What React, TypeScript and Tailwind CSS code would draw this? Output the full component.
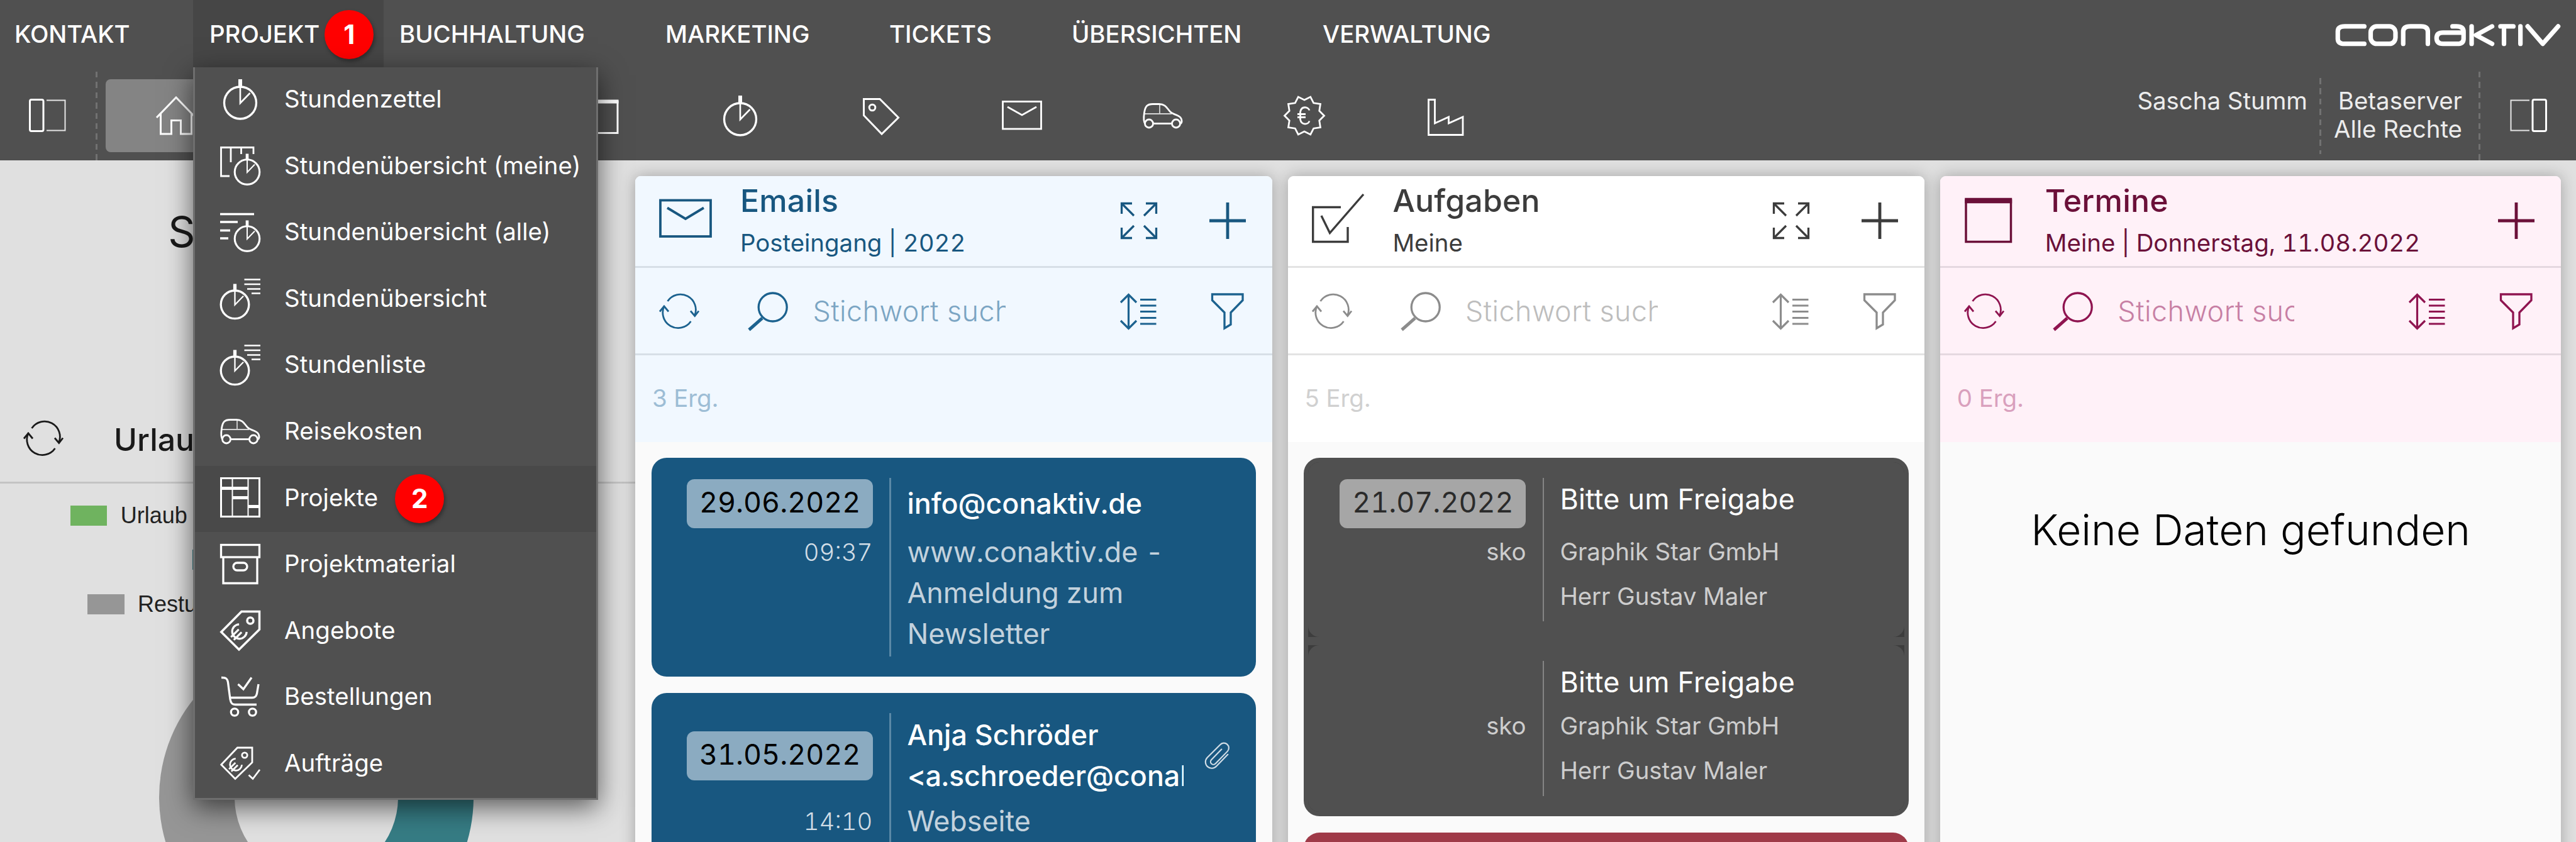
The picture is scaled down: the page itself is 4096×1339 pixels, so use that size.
import type { ReactNode } from "react";

type IconProps = { className?: string };

function Svg({
  w,
  h,
  sw = 3.3,
  className = "",
  children,
}: {
  w: number;
  h: number;
  sw?: number;
  className?: string;
  children: ReactNode;
}) {
  return (
    <svg
      width={w}
      height={h}
      viewBox={`0 0 ${w} ${h}`}
      fill="none"
      stroke="currentColor"
      strokeWidth={sw}
      className={`shrink-0 overflow-visible ${className}`}
      aria-hidden="true"
    >
      {children}
    </svg>
  );
}

/* ---------- toolbar and menu icons, 64 x 64 ---------- */

const Watch = () => (
  <>
    <circle cx="32" cy="37.5" r="25.5" />
    <path d="M32 0V12" strokeWidth="6" />
    <path d="M32 10V38L47.5 22" strokeWidth="2.6" />
  </>
);

const StopwatchIcon = () => (
  <Svg w={64} h={64}>
    <Watch />
  </Svg>
);

const WatchFrameIcon = () => (
  <Svg w={64} h={64}>
    <path d="M15 49H1.5V3.5H53V14M17 3.5V27M33.5 3.5V14" strokeWidth="2.8" />
    <g transform="translate(18.2 13.5) scale(0.775)" strokeWidth="4">
      <Watch />
    </g>
  </Svg>
);

const WatchLinesIcon = () => (
  <Svg w={64} h={64}>
    <path d="M0 3.5H54M0 16H28M0 29.5H16M0 42H13" />
    <g transform="translate(18.2 13.5) scale(0.775)" strokeWidth="4">
      <Watch />
    </g>
  </Svg>
);

const WatchListIcon = () => (
  <Svg w={64} h={64}>
    <path d="M38.5 1.5H64M38.5 9H64M43 16.5H64M50 23.5H64" strokeWidth="2.6" />
    <g transform="translate(-4.5 8.5) scale(0.875)" strokeWidth="3.8">
      <Watch />
    </g>
  </Svg>
);

const CarIcon = () => (
  <Svg w={64} h={64} sw={2.8}>
    <g transform="translate(0 12)">
      <path d="M4 33C1 30 1.5 22 2.5 15C4 5 7 1.5 16 1.5H26C37 1.5 38 8 44 14C47 17 51 17.5 56 20C62.500 23 63.500 30 60 33" />
      <path d="M17 32.5H46" />
      <path d="M2.500 17H46M27 1.5V17" strokeWidth="1.8" opacity="0.75" />
      <circle cx="10" cy="32.500" r="6.500" />
      <circle cx="53" cy="32.500" r="6.500" />
    </g>
  </Svg>
);

const PlanIcon = () => (
  <Svg w={64} h={64} sw={3}>
    <rect x="1.5" y="1.500" width="61" height="61" />
    <path d="M19.500 2V62M44.500 2V62" strokeWidth="2" />
    <path d="M2 17.500H45M19.500 32.500H45M44 46.500H62" strokeWidth="5" />
  </Svg>
);

const BoxIcon = () => (
  <Svg w={64} h={64}>
    <rect x="1.500" y="1.500" width="61" height="19.500" />
    <path d="M5 21V62.500H59V21" />
    <rect x="21" y="30" width="22" height="12" rx="6" />
  </Svg>
);

const Euro = () => (
  <>
    <path d="M8 -8.500A11.500 11.500 0 1 0 8 8.500" />
    <path d="M-15.500 -3.200H2M-15.500 3.200H2" />
  </>
);

const OfferIcon = () => (
  <Svg w={64} h={64} sw={3.5}>
    <path d="M34 1.500H62.500V30L30 62L1.800 34Z" />
    <circle cx="48" cy="16" r="5" />
    <g transform="translate(30.500 33.500) rotate(-45)" strokeWidth="3.200">
      <Euro />
    </g>
  </Svg>
);

const CartIcon = () => (
  <Svg w={64} h={64}>
    <path d="M2 1.500C9 1.500 11.500 3 12.500 9L16 36C17 42 19 44.500 24 44.500H58" />
    <path d="M16 33.500H51C56 33.500 57.500 31 58.500 27L61 12" />
    <path d="M28.500 12L37 20L50 1.500" />
    <circle cx="23" cy="56.500" r="5.700" />
    <circle cx="51.500" cy="56.500" r="5.700" />
  </Svg>
);

const OrderIcon = () => (
  <Svg w={64} h={64} sw={2.8}>
    <path d="M27.500 7H51V30.500L24 56.500L1.800 34Z" />
    <circle cx="39" cy="19" r="4.200" />
    <g transform="translate(25 34) rotate(-45) scale(0.820)" strokeWidth="3.400">
      <Euro />
    </g>
    <path d="M45.500 50.500L52 56.500L63 42" />
  </Svg>
);

const HomeIcon = () => (
  <Svg w={64} h={64} sw={3}>
    <path d="M1 35L32 3L63 35" />
    <path d="M7.500 29V61H24.500V39.500H39.500V61H56.500V29" />
  </Svg>
);

const CalendarIcon = () => (
  <Svg w={64} h={64} sw={3}>
    <path d="M3 8V59.500H61V8" />
    <path d="M1.500 9.500H62.500" strokeWidth="6" />
  </Svg>
);

const TagIcon = () => (
  <Svg w={64} h={64} sw={3}>
    <g transform="translate(3 4)">
      <path d="M1.500 1.500H27L56.500 31L30 57L1.500 27.500Z" />
      <circle cx="15" cy="15" r="4.800" />
    </g>
  </Svg>
);

const MailIcon = () => (
  <Svg w={64} h={64} sw={2.8}>
    <rect x="1.500" y="9.500" width="61" height="43.500" />
    <path d="M9 18L32 31L55 18" />
  </Svg>
);

const sealPoints = Array.from({ length: 20 }, (_, i) => {
  const r = i % 2 ? 31.5 : 25;
  const a = (i * 18 * Math.PI) / 180;
  return `${(32 + r * Math.sin(a)).toFixed(2)},${(32 - r * Math.cos(a)).toFixed(2)}`;
}).join(" ");

const SealIcon = () => (
  <Svg w={64} h={64} sw={2.8}>
    <polygon points={sealPoints} />
    <path d="M40 23.500C38.500 18 27.500 15.500 25.500 26V38C27.500 48 38.500 46 40 40.500M21 29.500H34M21 34.500H34" />
  </Svg>
);

const FactoryIcon = () => (
  <Svg w={64} h={64} sw={2.800}>
    <path d="M5.500 6.500H15.500V44L37.500 34V44L60 34V62.500H5.500Z" />
  </Svg>
);

const PanelIcon = ({ className = "" }: IconProps) => (
  <Svg w={59} h={53} className={className}>
    <rect x="1.500" y="1.500" width="21.500" height="50" rx="2.500" strokeWidth="3" />
    <path d="M28 2.500H57.500V50.500H28" strokeWidth="2" opacity="0.850" />
  </Svg>
);

/* ---------- panel icons ---------- */

const RefreshIcon = ({ className = "" }: IconProps) => (
  <Svg w={64} h={52} sw={2.800} className={className}>
    <path d="M13.500 10A24.500 24.500 0 0 1 56.500 33M50.500 42A24.500 24.500 0 0 1 8 18" />
    <path d="M50 25.500L56.800 33.500L63 25.500M1 26.500L8 18L15 26.500" />
  </Svg>
);

const SearchIcon = () => (
  <Svg w={64} h={62}>
    <circle cx="39.700" cy="24.500" r="22.500" />
    <path d="M23 42L2 60.500" strokeWidth="5" />
  </Svg>
);

const SortIcon = ({ className = "" }: IconProps) => (
  <Svg w={58} h={57} sw={3.200} className={className}>
    <path d="M13.500 2V55M1 14L13.500 1.500L26 14M1 43L13.500 55.500L26 43" />
    <path d="M32 9.500H57.500M32 19H57.500M32 28.500H57.500M32 38.500H57.500M32 48H57.500" />
  </Svg>
);

const FilterIcon = ({ className = "" }: IconProps) => (
  <Svg w={52} h={58} className={className}>
    <path d="M1.500 2H50V11.500L31 31V50L21 56V31L1.500 11.500Z" />
  </Svg>
);

const ExpandIcon = () => (
  <Svg w={58} h={58}>
    <path d="M1.500 18V1.500H18M40 1.500H56.500V18M56.500 40V56.500H40M18 56.500H1.500V40" />
    <path d="M2 2L21 21M56 2L37 21M56 56L37 37M2 56L21 37" />
  </Svg>
);

const PlusIcon = () => (
  <Svg w={58} h={58} sw={4.800}>
    <path d="M29 0V58M0 29H58" />
  </Svg>
);

const BigMailIcon = () => (
  <Svg w={84} h={84} sw={3.800}>
    <rect x="2" y="9.500" width="80" height="57.500" />
    <path d="M13 21.500L42 39L71 21.500" />
  </Svg>
);

const BigCheckIcon = () => (
  <Svg w={84} h={84} sw={3.400}>
    <path d="M46 20.500H1.700V75.500H57V52" />
    <path d="M15 34L28.500 61.500L82 0" />
  </Svg>
);

const BigCalendarIcon = () => (
  <Svg w={84} h={84} sw={3.500}>
    <path d="M3 8V75.500H74.500V8" />
    <path d="M1.200 10H76.200" strokeWidth="8.500" />
  </Svg>
);

const ClipIcon = () => (
  <svg
    width="52"
    height="52"
    viewBox="0 0 24 24"
    fill="none"
    stroke="currentColor"
    strokeWidth="1"
    strokeLinecap="round"
    className="shrink-0"
    aria-hidden="true"
  >
    <path d="m20 11-8.400 8.600a4.500 4.500 0 0 1-6.800-6.200l9.600-9.600a3.600 3.600 0 0 1 5.400 4.800l-8.800 9a2 2 0 0 1-3.200-2.600l7.600-7.800" />
  </svg>
);

const Logo = () => (
  <svg
    width="373"
    height="56"
    viewBox="0 0 1398 210"
    fill="none"
    stroke="currentColor"
    strokeWidth="27"
    strokeLinecap="round"
    strokeLinejoin="round"
    role="img"
    aria-label="ConAktiv"
  >
    <path d="M196 56H80Q38 56 38 86V130Q38 160 80 160H196" />
    <rect x="234" y="56" width="148" height="104" rx="36" />
    <path d="M428 160V88Q428 56 470 56H534Q575 56 575 88V160" />
    <path d="M722 56H745Q788 56 788 88V130Q788 160 750 160H665Q627 160 627 126Q627 93 665 93H782" />
    <path d="M836 56V160M958 56L862 108L958 160" />
    <path d="M1008 56H1085M1029 60V160M1127 56V160M1170 56L1260 160L1352 56" />
  </svg>
);

/* ---------- header ---------- */

const Badge = ({ children, className }: { children: ReactNode; className: string }) => (
  <span
    className={`flex size-[78px] shrink-0 items-center justify-center rounded-full bg-[#ff0000] text-[42px] leading-none font-bold text-white shadow-[2px_4px_6px_rgba(0,0,0,0.35)] ${className}`}
  >
    {children}
  </span>
);

const Dashes = ({ className }: { className: string }) => (
  <div
    className={`w-[3px] shrink-0 bg-[repeating-linear-gradient(to_bottom,#717171_0_9.5px,transparent_9.5px_16.4px)] ${className}`}
  />
);

const Nav = () => (
  <nav className="flex h-[107px] items-center pt-[2px] text-[38.4px] font-medium tracking-[-0.050px] text-white">
    <span className="w-[307px] pl-[23px]">KONTAKT</span>
    <span className="-mt-[2px] flex h-[107px] w-[303px] items-center bg-[#464646] pt-[2px] pl-[26px]">
      PROJEKT
      <Badge className="ml-[8px]">1</Badge>
    </span>
    <span className="w-[424px] pl-[25px]">BUCHHALTUNG</span>
    <span className="w-[356px] pl-[24px]">MARKETING</span>
    <span className="w-[290px] pl-[24px]">TICKETS</span>
    <span className="w-[398px] pl-[24px]">ÜBERSICHTEN</span>
    <span className="pl-[25px]">VERWALTUNG</span>
    <div className="mr-[16px] ml-auto">
      <Logo />
    </div>
  </nav>
);

const Cell = ({ children, active }: { children?: ReactNode; active?: boolean }) => (
  <div
    className={`flex h-[116px] w-[224.200px] items-center justify-center rounded-[8px] ${active ? "bg-[#848484]" : ""}`}
  >
    {children}
  </div>
);

const Toolbar = () => (
  <div className="flex h-[148px] text-white">
    <div className="flex w-[152px] items-center pt-[4px] pl-[46px]">
      <PanelIcon />
    </div>
    <Dashes className="mt-[7px]" />
    <div className="ml-[13px] flex items-center pt-[6px]">
      <Cell active>
        <HomeIcon />
      </Cell>
      <Cell />
      <Cell />
      <Cell>
        <CalendarIcon />
      </Cell>
      <Cell>
        <StopwatchIcon />
      </Cell>
      <Cell>
        <TagIcon />
      </Cell>
      <Cell>
        <MailIcon />
      </Cell>
      <Cell>
        <CarIcon />
      </Cell>
      <Cell>
        <SealIcon />
      </Cell>
      <Cell>
        <FactoryIcon />
      </Cell>
    </div>
    <div className="ml-auto flex text-right text-[38.4px] leading-[44.8px] text-[#ececec]">
      <div className="pt-[31px] pr-[19px]">Sascha Stumm</div>
      <Dashes className="mt-[17px] mb-[10px]" />
      <div className="w-[250px] pt-[31px] pr-[26px]">
        Betaserver
        <br />
        Alle Rechte
      </div>
      <Dashes className="mt-[7px]" />
      <div className="flex items-center pt-[4px] pr-[46px] pl-[47px] text-white">
        <PanelIcon className="rotate-180" />
      </div>
    </div>
  </div>
);

/* ---------- dropdown menu ---------- */

const menu: { label: string; icon: ReactNode; badge?: string }[] = [
  { label: "Stundenzettel", icon: <StopwatchIcon /> },
  { label: "Stundenübersicht (meine)", icon: <WatchFrameIcon /> },
  { label: "Stundenübersicht (alle)", icon: <WatchLinesIcon /> },
  { label: "Stundenübersicht", icon: <WatchListIcon /> },
  { label: "Stundenliste", icon: <WatchListIcon /> },
  { label: "Reisekosten", icon: <CarIcon /> },
  { label: "Projekte", icon: <PlanIcon />, badge: "2" },
  { label: "Projektmaterial", icon: <BoxIcon /> },
  { label: "Angebote", icon: <OfferIcon /> },
  { label: "Bestellungen", icon: <CartIcon /> },
  { label: "Aufträge", icon: <OrderIcon /> },
];

const Menu = () => (
  <div className="absolute top-[107px] left-[307px] z-10 w-[643.5px] border-x-[3px] border-b-[3px] border-[#6e6e6e] bg-[#505050] text-white shadow-[0_12px_40px_rgba(0,0,0,0.6)]">
    {menu.map((m) => (
      <div
        key={m.label}
        className={`flex h-[105.6px] items-center pb-[4px] pl-[39.5px] text-[38.4px] tracking-[0.08px] ${m.badge ? "bg-[#494949]" : ""}`}
      >
        {m.icon}
        <span className="ml-[38.5px]">{m.label}</span>
        {m.badge && <Badge className="mt-[3px] ml-[27px]">{m.badge}</Badge>}
      </div>
    ))}
  </div>
);

/* ---------- left dashboard area ---------- */

const Swatch = ({ className, label }: { className: string; label?: string }) => (
  <div className="flex h-[70.5px] items-center">
    <div className={`h-[32px] w-[58.5px] shrink-0 ${className}`} />
    {label && (
      <span className="ml-[21.500px] font-['Liberation_Sans'] text-[36px] leading-none text-[#222]">{label}</span>
    )}
  </div>
);

const Dashboard = () => (
  <section className="flex w-[1010.4px] shrink-0 flex-col">
    <div className="flex h-[228px] items-center justify-center text-[67.5px] text-[#1a1a1a]">
      Sascha Stumm
    </div>
    <div className="mt-[149px] flex h-[137px] items-center border-b-[3px] border-[#c4c4c4] pl-[37px] text-[50px] font-medium text-[#1a1a1a]">
      <RefreshIcon className="-mt-[4px]" />
      <span className="ml-[80px]">Urlaub</span>
    </div>
    <div className="pt-[15.500px]">
      <Swatch className="ml-[111.7px] bg-[#6fb35f]" label="Urlaub" />
      <Swatch className="ml-[305.5px] bg-[#367c84]" />
      <Swatch className="ml-[139px] bg-[#969696]" label="Resturlaub" />
    </div>
    <svg width="500" height="500" viewBox="-250 -250 500 500" className="mt-[22px] ml-[252.5px] shrink-0">
      <path d="M0 -250A250 250 0 0 0 0 250V130A130 130 0 0 1 0 -130Z" fill="#969696" />
      <path d="M0 -250A250 250 0 0 1 0 250V130A130 130 0 0 0 0 -130Z" fill="#367c84" />
    </svg>
  </section>
);

/* ---------- panels ---------- */

type Tone = { head: string; title: string; tools: string; hint: string; count: string; line: string };

const tones: Record<"blue" | "gray" | "pink", Tone> = {
  blue: {
    head: "bg-[#f1f8ff]",
    title: "text-[#185780]",
    tools: "text-[#1c628f]",
    hint: "text-[#7ba5c3]",
    count: "text-[#9dbdd5]",
    line: "border-[#d7dfe7]",
  },
  gray: {
    head: "bg-white",
    title: "text-[#3c3c3c]",
    tools: "text-[#8c8c8c]",
    hint: "text-[#bdbdbd]",
    count: "text-[#d0d0d0]",
    line: "border-[#e3e3e3]",
  },
  pink: {
    head: "bg-[#fff1f8]",
    title: "text-[#6b1039]",
    tools: "text-[#8f1450]",
    hint: "text-[#c77fa4]",
    count: "text-[#d9a0bd]",
    line: "border-[#e5d8e0]",
  },
};

function Panel({
  tone,
  width,
  icon,
  title,
  sub,
  count,
  expand = true,
  children,
}: {
  tone: Tone;
  width: string;
  icon: ReactNode;
  title: string;
  sub: string;
  count: string;
  expand?: boolean;
  children: ReactNode;
}) {
  return (
    <section
      className={`flex h-[1140px] shrink-0 flex-col overflow-hidden rounded-t-[9px] bg-[#fafafa] shadow-[0_0_24px_rgba(0,0,0,0.28)] ${width}`}
    >
      <div className={tone.head}>
        <div className={`flex h-[145.500px] items-center border-b-[3px] pr-[42px] pl-[38px] ${tone.line} ${tone.title}`}>
          {icon}
          <div className="flex h-full flex-1 flex-col pt-[5.500px] pl-[44.500px]">
            <div className="text-[50px] leading-[66px] font-medium tracking-[0.200px]">{title}</div>
            <div className="mt-[6px] text-[38.4px] leading-[56px] whitespace-nowrap tabular-nums">{sub}</div>
          </div>
          {expand && <ExpandIcon />}
          <div className="ml-[83px]">
            <PlusIcon />
          </div>
        </div>
        <div className={`flex h-[139px] items-center border-b-[3px] pt-[3px] pr-[45px] pl-[38px] ${tone.line} ${tone.tools}`}>
          <RefreshIcon />
          <div className="ml-[77px]">
            <SearchIcon />
          </div>
          <div
            className={`ml-[39px] w-0 flex-1 overflow-hidden text-[44.8px] leading-[60px] font-light tracking-[0.5px] whitespace-nowrap ${tone.hint}`}
          >
            Stichwort suchen
          </div>
          <SortIcon className="ml-[182px]" />
          <FilterIcon className="ml-[87px]" />
        </div>
        <div className={`flex h-[138.400px] items-center pl-[26.500px] text-[38.4px] tracking-[-0.050px] ${tone.count}`}>
          {count}
        </div>
      </div>
      {children}
    </section>
  );
}

function Mail({
  date,
  time,
  from,
  subject,
  attached,
}: {
  date: string;
  time: string;
  from: string[];
  subject: string[];
  attached?: boolean;
}) {
  return (
    <article className="flex shrink-0 rounded-[24px] bg-[#185780] text-[44.8px] leading-[65px] text-white tabular-nums">
      <div className={`flex w-[378.500px] flex-col items-end pr-[26px] ${attached ? "pt-[35px]" : "pt-[41px]"}`}>
        <div className={`flex items-center ${attached ? "h-[130px]" : "h-[65px]"}`}>
          <span className="flex h-[78px] w-[296.500px] items-center justify-center rounded-[12px] bg-[#8babc1] pb-[3px] text-black">
            {date}
          </span>
        </div>
        <div className={`pr-[1px] text-[38.4px] font-light text-[#d1dde6] ${attached ? "mt-[7px]" : "mt-[12.500px]"}`}>{time}</div>
      </div>
      <div className="my-[32px] w-[3px] shrink-0 bg-[#5a88a6]" />
      <div className={`flex flex-1 flex-col pl-[25px] ${attached ? "pt-[35px] pb-[80px]" : "pt-[41px] pb-[35px]"}`}>
        <div className="flex items-center">
          <div className="w-[440px] overflow-hidden font-medium whitespace-nowrap">
            {from.map((f) => (
              <div key={f}>{f}</div>
            ))}
          </div>
          {attached && (
            <div className="ml-[27px] text-[#d1dde6]">
              <ClipIcon />
            </div>
          )}
        </div>
        <div className={`text-[#c3d2dd] ${attached ? "mt-[7px]" : "mt-[12.500px]"}`}>
          {subject.map((s) => (
            <div key={s}>{s}</div>
          ))}
        </div>
      </div>
    </article>
  );
}

const Task = ({ date }: { date?: string }) => (
  <div className="flex rounded-[18px] bg-[#505050] text-[38.4px] leading-[71px] tracking-[-0.100px] text-[#cdcdcd]">
    <div className="flex w-[372.500px] flex-col items-end pt-[27.500px] pr-[26.500px]">
      <div className={`flex h-[65px] items-center text-[44.8px] tracking-normal ${date ? "pt-[13px]" : ""}`}>
        {date && (
          <span className="flex h-[78px] w-[296px] items-center justify-center rounded-[12px] bg-[#a6a6a6] pb-[3px] text-[#2b2b2b] tabular-nums">
            {date}
          </span>
        )}
      </div>
      <div className={date ? "mt-[15px]" : "mt-[1px]"}>sko</div>
    </div>
    <div className="my-[25px] w-[2.500px] shrink-0 bg-[#858585]" />
    <div className={`pt-[27.500px] pl-[25px] ${date ? "pb-[28.200px]" : "pb-[29.500px]"}`}>
      <div className="text-[44.8px] leading-[65px] tracking-[0.25px] text-white">Bitte um Freigabe</div>
      <div className={date ? "mt-[15px]" : "mt-[1px]"}>Graphik Star GmbH</div>
      <div>Herr Gustav Maler</div>
    </div>
  </div>
);

export default function App() {
  return (
    <div className="relative flex h-[1339px] w-[4096px] flex-col overflow-hidden bg-[#e0e0e0] font-['Inter',sans-serif]">
      <header className="shrink-0 bg-[#505050]">
        <Nav />
        <Toolbar />
      </header>
      <Menu />
      <main className="flex h-[1084px] shrink-0 items-start overflow-hidden">
        <Dashboard />
        <div className="flex gap-[25.300px] pt-[25px]">
          <Panel
            tone={tones.blue}
            width="w-[1012.200px]"
            icon={<BigMailIcon />}
            title="Emails"
            sub="Posteingang | 2022"
            count="3 Erg."
          >
            <div className="flex flex-col gap-[26px] px-[25.500px] pt-[25px]">
              <Mail
                date="29.06.2022"
                time="09:37"
                from={["info@conaktiv.de"]}
                subject={["www.conaktiv.de -", "Anmeldung zum", "Newsletter"]}
              />
              <Mail
                date="31.05.2022"
                time="14:10"
                from={["Anja Schröder", "<a.schroeder@conaktiv.de>"]}
                subject={["Webseite"]}
                attached
              />
            </div>
          </Panel>
          <Panel
            tone={tones.gray}
            width="w-[1012.200px]"
            icon={<BigCheckIcon />}
            title="Aufgaben"
            sub="Meine"
            count="5 Erg."
          >
            <div className="flex flex-col gap-[26px] px-[25.500px] pt-[25px]">
              <div className="shrink-0 rounded-[25px] border-[7px] border-[#505050] bg-[#3d3d3d]">
                <Task date="21.07.2022" />
                <div className="h-[13px] bg-[#505050]" />
                <Task />
              </div>
              <div className="h-[300px] shrink-0 rounded-[25px] bg-[#9f3a48]" />
            </div>
          </Panel>
          <Panel
            tone={tones.pink}
            width="w-[986.500px]"
            icon={<BigCalendarIcon />}
            title="Termine"
            sub="Meine | Donnerstag, 11.08.2022"
            count="0 Erg."
            expand={false}
          >
            <div className="pt-[93px] text-center text-[67.500px] leading-[94px] font-light text-black">
              Keine Daten gefunden
            </div>
          </Panel>
        </div>
      </main>
    </div>
  );
}
